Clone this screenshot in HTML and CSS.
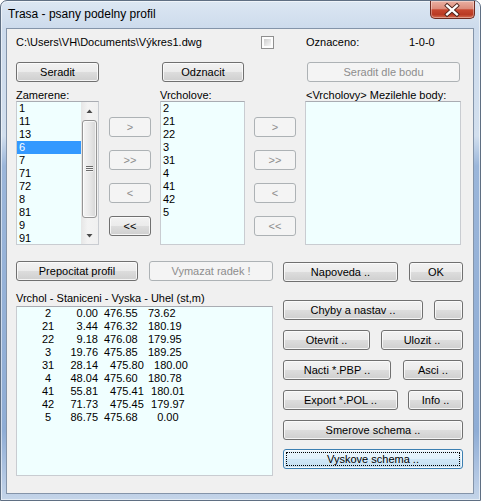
FILE: index.html
```html
<!DOCTYPE html>
<html>
<head>
<meta charset="utf-8">
<title>Trasa - psany podelny profil</title>
<link rel="stylesheet" href="styles.css">
</head>
<body>
<div class="window">
  <div class="titlebar">
    <span class="title">Trasa - psany podelny profil</span>
    <div class="close">
      <svg width="45" height="18" viewBox="0 0 45 18">
        <path d="M17.5 4.5 L27.5 13.5 M27.5 4.5 L17.5 13.5" stroke="#4a2019" stroke-width="4.2" stroke-linecap="square" fill="none"/>
        <path d="M17.5 4.5 L27.5 13.5 M27.5 4.5 L17.5 13.5" stroke="#ffffff" stroke-width="2.4" stroke-linecap="square" fill="none"/>
      </svg>
    </div>
  </div>
  <div class="client">
    <div class="pathrow">
      <span class="path">C:\Users\VH\Documents\Výkres1.dwg</span>
      <span class="check"></span>
      <span class="ozn-label">Oznaceno:</span>
      <span class="ozn-val">1-0-0</span>
    </div>

    <div class="toprow">
      <button class="btn b-seradit">Seradit</button>
      <button class="btn b-odznacit">Odznacit</button>
      <button class="btn dis b-dle">Seradit dle bodu</button>
    </div>

    <div class="lists">
      <div class="lbl lbl1">Zamerene:</div>
      <div class="lbl lbl2">Vrcholove:</div>
      <div class="lbl lbl3">&lt;Vrcholovy&gt; Mezilehle body:</div>

      <div class="listbox lb1">
        <div class="items">
          <div class="item">1</div>
          <div class="item">11</div>
          <div class="item">13</div>
          <div class="item sel">6</div>
          <div class="item">7</div>
          <div class="item">71</div>
          <div class="item">72</div>
          <div class="item">8</div>
          <div class="item">81</div>
          <div class="item">9</div>
          <div class="item">91</div>
        </div>
        <div class="vscroll">
          <div class="sb-arrow">
            <svg width="17" height="17" viewBox="0 0 17 17"><polygon points="5.5,11 8.5,7.5 11.5,11" fill="#4a4a4a"/></svg>
          </div>
          <div class="sb-track">
            <div class="sb-thumb"><span class="grip"></span></div>
          </div>
          <div class="sb-arrow">
            <svg width="17" height="17" viewBox="0 0 17 17"><polygon points="5.5,7 8.5,10.5 11.5,7" fill="#4a4a4a"/></svg>
          </div>
        </div>
      </div>

      <div class="arrows arr1">
        <button class="btn dis abtn">&gt;</button>
        <button class="btn dis abtn">&gt;&gt;</button>
        <button class="btn dis abtn">&lt;</button>
        <button class="btn abtn">&lt;&lt;</button>
      </div>

      <div class="listbox lb2">
        <div class="items">
          <div class="item">2</div>
          <div class="item">21</div>
          <div class="item">22</div>
          <div class="item">3</div>
          <div class="item">31</div>
          <div class="item">4</div>
          <div class="item">41</div>
          <div class="item">42</div>
          <div class="item">5</div>
        </div>
      </div>

      <div class="arrows arr2">
        <button class="btn dis abtn">&gt;</button>
        <button class="btn dis abtn">&gt;&gt;</button>
        <button class="btn dis abtn">&lt;</button>
        <button class="btn dis abtn">&lt;&lt;</button>
      </div>

      <div class="listbox lb3"></div>
    </div>

    <div class="bottom">
      <div class="leftcol">
        <div class="row">
          <button class="btn b-prep">Prepocitat profil</button>
          <button class="btn dis b-vym">Vymazat radek !</button>
        </div>
        <div class="tbl-label">Vrchol - Staniceni - Vyska - Uhel (st,m)</div>
        <div class="table">
          <div class="trow"><span class="c1">2</span><span class="c2">0.00</span><span class="c3">476.55</span><span class="c4">73.62</span></div>
          <div class="trow"><span class="c1">21</span><span class="c2">3.44</span><span class="c3">476.32</span><span class="c4">180.19</span></div>
          <div class="trow"><span class="c1">22</span><span class="c2">9.18</span><span class="c3">476.08</span><span class="c4">179.95</span></div>
          <div class="trow"><span class="c1">3</span><span class="c2">19.76</span><span class="c3">475.85</span><span class="c4">189.25</span></div>
          <div class="trow"><span class="c1">31</span><span class="c2">28.14</span><span class="c3">  475.80</span><span class="c4">  180.00</span></div>
          <div class="trow"><span class="c1">4</span><span class="c2">48.04</span><span class="c3">475.60</span><span class="c4">180.78</span></div>
          <div class="trow"><span class="c1">41</span><span class="c2">55.81</span><span class="c3">  475.41</span><span class="c4"> 180.01</span></div>
          <div class="trow"><span class="c1">42</span><span class="c2">71.73</span><span class="c3">  475.45</span><span class="c4"> 179.97</span></div>
          <div class="trow"><span class="c1">5</span><span class="c2">86.75</span><span class="c3">475.68</span><span class="c4">   0.00</span></div>
        </div>
      </div>

      <div class="rightcol">
        <div class="row r1">
          <button class="btn b-napoveda">Napoveda ..</button>
          <button class="btn b-ok">OK</button>
        </div>
        <div class="row r2">
          <button class="btn b-chyby">Chyby a nastav ..</button>
          <button class="btn b-small"></button>
        </div>
        <div class="row r3">
          <button class="btn b-otevrit">Otevrit ..</button>
          <button class="btn b-ulozit">Ulozit ..</button>
        </div>
        <div class="row r4">
          <button class="btn b-nacti">Nacti *.PBP ..</button>
          <button class="btn b-asci">Asci ..</button>
        </div>
        <div class="row r5">
          <button class="btn b-export">Export *.POL ..</button>
          <button class="btn b-info">Info ..</button>
        </div>
        <div class="row r6">
          <button class="btn b-full">Smerove schema ..</button>
        </div>
        <div class="row r7">
          <button class="btn focus b-full">Vyskove schema ..</button>
        </div>
      </div>
    </div>
  </div>
</div>
</body>
</html>
```

FILE: styles.css
```css
html, body {
  margin: 0;
  padding: 0;
}

body {
  width: 481px;
  height: 501px;
  overflow: hidden;
  background: #ffffff;
  font-family: "Liberation Sans", Arial, sans-serif;
  font-size: 11px;
  font-weight: 400;
  color: #000;
}

.window {
  box-sizing: border-box;
  width: 481px;
  height: 501px;
  border: 1px solid #5f6f83;
  border-radius: 7px 7px 0 0;
  background: linear-gradient(to bottom,
    #dce7f3 0px,
    #cddbec 27px,
    #d2dfee 135px,
    #9bb6da 165px,
    #8fadd5 430px,
    #b5c9e4 478px,
    #c6d6e9 501px);
  box-shadow: inset 0 0 0 1px rgba(255, 255, 255, 0.55);
  display: flex;
  flex-direction: column;
}

/* ---------- title bar ---------- */
.titlebar {
  height: 27px;
  display: flex;
  flex-shrink: 0;
}

.title {
  font-size: 12px;
  line-height: 27px;
  padding-left: 7px;
  color: #000;
}

.close {
  margin-left: auto;
  margin-right: 5px;
  width: 45px;
  height: 18px;
  box-sizing: border-box;
  border: 1px solid #6e2a20;
  border-top: none;
  border-radius: 0 0 5px 5px;
  background: linear-gradient(to bottom,
    #eab0a2 0%,
    #dc8c7b 45%,
    #c7472f 52%,
    #b93a23 80%,
    #d66e52 100%);
  box-shadow: inset 0 0 0 1px rgba(255, 255, 255, 0.35);
  display: flex;
  align-items: center;
  justify-content: center;
}

.close svg {
  display: block;
  margin-left: -1px;
}

/* ---------- client area ---------- */
.client {
  flex: 1;
  margin: 0 6px 6px 5px;
  box-sizing: border-box;
  border: 1px solid #8494a9;
  background: #f0f0f0;
  padding: 7px 0 0 9px;
}

.pathrow {
  display: flex;
  height: 13px;
  line-height: 13px;
}

.path {
  width: 245px;
}

.check {
  box-sizing: border-box;
  width: 13px;
  height: 13px;
  border: 1px solid #8f8f8f;
  padding: 2px;
  background: linear-gradient(135deg, #cdcdcd, #f7f7f7) content-box, #fdfdfd;
}

.ozn-label {
  margin-left: 32px;
  width: 103px;
}

/* ---------- buttons ---------- */
.btn {
  -webkit-appearance: none;
  appearance: none;
  box-sizing: border-box;
  height: 20px;
  margin: 0;
  padding: 0;
  font-family: "Liberation Sans", Arial, sans-serif;
  font-size: 11px;
  font-weight: 400;
  line-height: 18px;
  color: #000;
  text-align: center;
  border: 1px solid #707070;
  border-radius: 3px;
  background: linear-gradient(to bottom,
    #f2f2f2 0%,
    #ebebeb 50%,
    #dddddd 50%,
    #cfcfcf 100%);
  box-shadow: inset 0 0 0 1px rgba(252, 252, 252, 0.8);
  position: relative;
  flex-shrink: 0;
}

.btn.dis {
  border-color: #adb2b5;
  background: #f4f4f4;
  box-shadow: none;
  color: #8d8d8d;
}

.btn.focus {
  border-color: #3c7fb1;
  background: linear-gradient(to bottom,
    #eaf5fc 0%,
    #e1f0fa 50%,
    #d0e7f7 50%,
    #c3dff2 100%);
}

.btn.focus::after {
  content: "";
  position: absolute;
  left: 2px;
  top: 2px;
  right: 2px;
  bottom: 2px;
  border: 1px dotted #000;
}

.toprow {
  display: flex;
  margin-top: 13px;
}

.b-seradit { width: 83px; }
.b-odznacit { width: 82px; margin-left: 63px; }
.b-dle { width: 153px; margin-left: 63px; }

/* ---------- lists ---------- */
.lists {
  display: grid;
  grid-template-columns: 83px 10px 42px 9px 85px 9px 42px 9px 156px;
  grid-template-rows: 11px 144px;
  margin-top: 8px;
}

.lbl {
  line-height: 11px;
  grid-row: 1;
  white-space: nowrap;
}

.lbl1 { grid-column: 1 / 4; }
.lbl2 { grid-column: 5 / 8; }
.lbl3 { grid-column: 9; padding-left: 1px; }

.listbox {
  grid-row: 2;
  box-sizing: border-box;
  border: 1px solid #c9ccd1;
  border-top-color: #a9acb2;
  background: #f0ffff;
  display: flex;
  overflow: hidden;
}

.lb1 { grid-column: 1; }
.lb2 { grid-column: 5; }
.lb3 { grid-column: 9; }

.items {
  flex: 1;
  min-width: 0;
}

.item {
  height: 13px;
  line-height: 13px;
  padding-left: 2px;
}

.item.sel {
  background: #3399ff;
  color: #fff;
}

.vscroll {
  width: 17px;
  display: flex;
  flex-direction: column;
  background: linear-gradient(to right, #e6e6e6, #f3f3f3 40%, #f0f0f0);
}

.sb-arrow {
  height: 17px;
  flex-shrink: 0;
}

.sb-arrow svg {
  display: block;
}

.sb-track {
  flex: 1;
  padding-top: 1px;
}

.sb-thumb {
  box-sizing: border-box;
  margin: 0 1px;
  height: 98px;
  border: 1px solid #959595;
  border-radius: 3px;
  background: linear-gradient(to right, #f4f4f4, #e8e8e8 50%, #d6d6d6);
  box-shadow: inset 0 0 0 1px rgba(255, 255, 255, 0.7);
  display: flex;
  align-items: center;
  justify-content: center;
}

.grip {
  width: 7px;
  height: 6px;
  background: repeating-linear-gradient(to bottom, #6a6a6a 0 1px, #f4f4f4 1px 2px);
}

.arrows {
  grid-row: 2;
  display: flex;
  flex-direction: column;
  gap: 13px;
  padding-top: 16px;
}

.arr1 { grid-column: 3; }
.arr2 { grid-column: 7; }

.abtn {
  width: 42px;
}

/* ---------- bottom ---------- */
.bottom {
  display: flex;
  margin-top: 16px;
}

.leftcol {
  width: 257px;
}

.row {
  display: flex;
}

.b-prep { width: 122px; }
.b-vym { width: 124px; margin-left: 11px; }

.tbl-label {
  margin-top: 11px;
  line-height: 12px;
  white-space: nowrap;
}

.table {
  margin-top: 2px;
  box-sizing: border-box;
  height: 170px;
  border: 1px solid #c9ccd1;
  border-top-color: #a9acb2;
  background: #f0ffff;
  padding-left: 21px;
}

.trow {
  display: grid;
  grid-template-columns: 20px 40px 50px auto;
  height: 13px;
  line-height: 13px;
  white-space: pre;
}

.c1 { text-align: center; }
.c2 { text-align: right; }
.c3 { padding-left: 6px; }

.rightcol {
  width: 180px;
  margin-left: 10px;
  padding-top: 1px;
}

.r2 { margin-top: 18px; }
.r3, .r4, .r5, .r6 { margin-top: 10px; }
.r7 { margin-top: 9px; }

.b-napoveda { width: 115px; }
.b-ok { width: 54px; margin-left: 11px; }
.b-chyby { width: 140px; }
.b-small { width: 29px; margin-left: 11px; }
.b-otevrit { width: 87px; }
.b-ulozit { width: 82px; margin-left: 11px; }
.b-nacti { width: 108px; }
.b-asci { width: 60px; margin-left: 12px; }
.b-export { width: 115px; }
.b-info { width: 55px; margin-left: 10px; }
.b-full { width: 180px; }
```
